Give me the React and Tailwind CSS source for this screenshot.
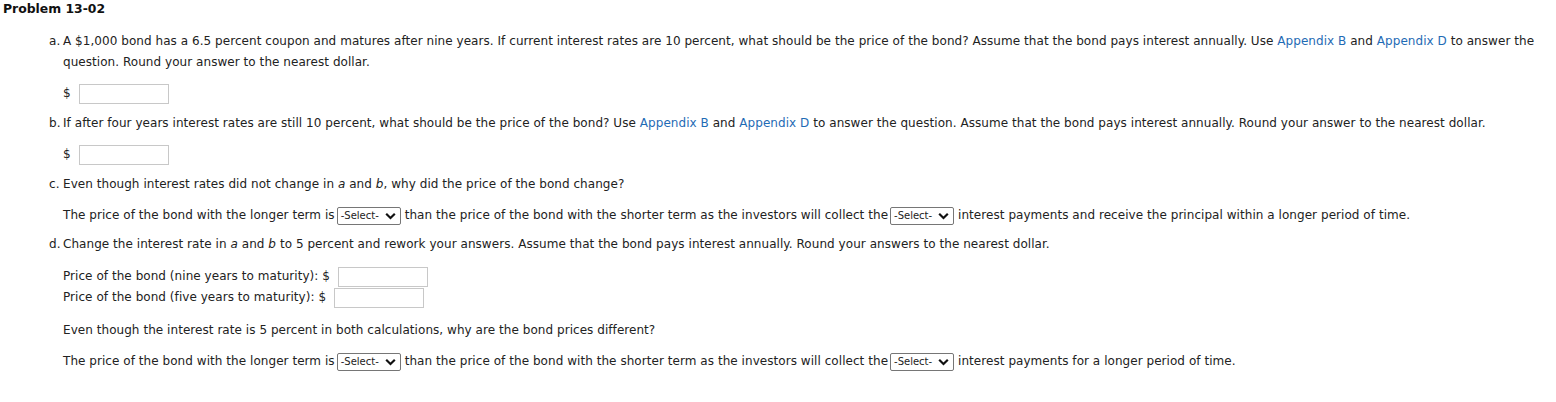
import React from 'react';

const font = { fontFamily: '"DejaVu Sans", Verdana, sans-serif' };

function Link({ children }) {
  return <span className="text-[#1f6bb5]">{children}</span>;
}

function Answer() {
  return <input type="text" className="h-[20px] w-[90px] border border-[#c8c8c8] bg-white align-middle" />;
}

function Select() {
  return (
    <span className="ml-[2px] mr-[4px] inline-flex h-[18px] w-[64px] items-center justify-between rounded-[2px] border border-[#767676] bg-white pl-[3px] pr-[4px] align-middle">
      <span className="text-[10px] leading-none tracking-normal">-Select-</span>
      <svg width="11" height="8" viewBox="0 0 11 8">
        <path d="M1.2 1.8 L5.5 6 L9.8 1.8" fill="none" stroke="#111" strokeWidth="2.2" />
      </svg>
    </span>
  );
}

function Item({ label, children }) {
  return (
    <div className="flex pl-[49px]">
      <span className="w-[14px] shrink-0">{label}</span>
      <div className="flex-1">{children}</div>
    </div>
  );
}

export default function App() {
  return (
    <div className="min-h-screen bg-white text-[12px] leading-[21px] tracking-[0.05px] text-[#222]" style={font}>
      <div className="px-[3px] text-[12.4px] font-bold leading-[17px] tracking-normal text-[#111]">Problem 13-02</div>

      <div className="mt-[14px] flex flex-col">
        <Item label="a.">
          <p className="pr-[12px]">
            A $1,000 bond has a 6.5 percent coupon and matures after nine years. If current interest rates are 10 percent, what should be the price of the bond? Assume that the bond pays interest annually. Use <Link>Appendix B</Link> and <Link>Appendix D</Link> to answer the question. Round your answer to the nearest dollar.
          </p>
          <div className="mt-[10px] flex items-center gap-[8px]">
            <span>$</span>
            <Answer />
          </div>
        </Item>

        <div className="mt-[9px]">
          <Item label="b.">
            <p>
              If after four years interest rates are still 10 percent, what should be the price of the bond? Use <Link>Appendix B</Link> and <Link>Appendix D</Link> to answer the question. Assume that the bond pays interest annually. Round your answer to the nearest dollar.
            </p>
            <div className="mt-[10px] flex items-center gap-[8px]">
              <span>$</span>
              <Answer />
            </div>
          </Item>
        </div>

        <div className="mt-[9px]">
          <Item label="c.">
            <p>
              Even though interest rates did not change in <i>a</i> and <i>b</i>, why did the price of the bond change?
            </p>
            <p className="mt-[10px]">
              The price of the bond with the longer term is<Select />than the price of the bond with the shorter term as the investors will collect the<Select />interest payments and receive the principal within a longer period of time.
            </p>
          </Item>
        </div>

        <div className="mt-[8px]">
          <Item label="d.">
            <p>
              Change the interest rate in <i>a</i> and <i>b</i> to 5 percent and rework your answers. Assume that the bond pays interest annually. Round your answers to the nearest dollar.
            </p>
            <div className="mt-[11px]">
              <div className="flex items-center gap-[8px]">
                <span>Price of the bond (nine years to maturity): $</span>
                <Answer />
              </div>
              <div className="flex items-center gap-[8px]">
                <span>Price of the bond (five years to maturity): $</span>
                <Answer />
              </div>
            </div>
            <p className="mt-[12px]">
              Even though the interest rate is 5 percent in both calculations, why are the bond prices different?
            </p>
            <p className="mt-[10px]">
              The price of the bond with the longer term is<Select />than the price of the bond with the shorter term as the investors will collect the<Select />interest payments for a longer period of time.
            </p>
          </Item>
        </div>
      </div>
    </div>
  );
}
